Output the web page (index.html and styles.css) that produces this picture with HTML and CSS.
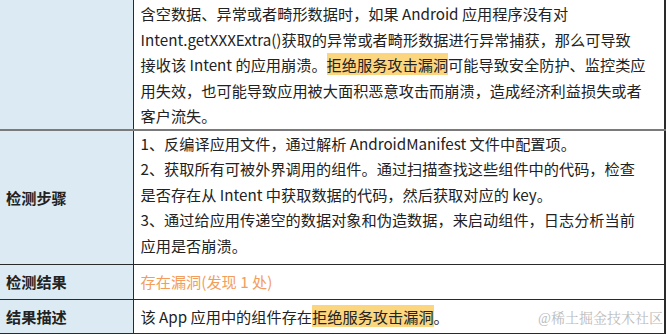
FILE: index.html
```html
<!DOCTYPE html>
<html lang="zh-CN">
<head>
  <meta charset="UTF-8">
  <meta name="viewport" content="width=device-width, initial-scale=1.0">
  <title>检测报告</title>
  <link rel="stylesheet" href="styles.css">
</head>
<body>
  <table class="report">
    <colgroup>
      <col class="col-label">
      <col>
    </colgroup>
    <tr class="row-first">
      <th class="label"></th>
      <td class="value">
        含空数据、异常或者畸形数据时，如果 Android 应用程序没有对<br>
        Intent.getXXXExtra()获取的异常或者畸形数据进行异常捕获，那么可导致<br>
        接收该 Intent 的应用崩溃。<span class="mark">拒绝服务攻击漏洞</span>可能导致安全防护、监控类应<br>
        用失效，也可能导致应用被大面积恶意攻击而崩溃，造成经济利益损失或者<br>
        客户流失。
      </td>
    </tr>
    <tr class="row-steps">
      <th class="label">检测步骤</th>
      <td class="value">
        1、反编译应用文件，通过解析 AndroidManifest 文件中配置项。<br>
        2、获取所有可被外界调用的组件。通过扫描查找这些组件中的代码，检查<br>
        是否存在从 Intent 中获取数据的代码，然后获取对应的 key。<br>
        3、通过给应用传递空的数据对象和伪造数据，来启动组件，日志分析当前<br>
        应用是否崩溃。
      </td>
    </tr>
    <tr>
      <th class="label">检测结果</th>
      <td class="value result">存在漏洞(发现 1 处)</td>
    </tr>
    <tr>
      <th class="label">结果描述</th>
      <td class="value">该 App 应用中的组件存在<span class="mark">拒绝服务攻击漏洞</span>。</td>
    </tr>
  </table>
  <div class="watermark">@稀土掘金技术社区</div>
</body>
</html>
```

FILE: styles.css
```css
body {
  margin: 0;
  background: #ffffff;
  font-family: "Noto Sans CJK SC", "Noto Sans", sans-serif;
  color: #222;
  overflow: hidden;
}
.report {
  border-collapse: collapse;
  table-layout: fixed;
  width: 666px;
  font-size: 15.2px;
  line-height: 25.5px;
}
.col-label {
  width: 133px;
}
.report th,
.report td {
  border: 1px solid #2a2a2a;
  border-left: none;
  white-space: nowrap;
  overflow: hidden;
}
.report td {
  border-right: 2px solid #2a2a2a;
}
.label {
  background: #dcebf3;
  text-align: left;
  font-weight: bold;
  padding: 0 6px;
  border-right: 2px solid #2a2a2a;
  vertical-align: middle;
}
.value {
  padding: 4px 6px 4px 7px;
  text-align: left;
  vertical-align: middle;
}
.row-first th,
.row-first td {
  border-top: none;
  border-bottom: 2px solid #7a7a7a;
}
.row-first .value {
  padding-top: 1px;
  padding-bottom: 0;
}
.row-steps .value {
  padding-top: 0;
  padding-bottom: 6px;
}
.result {
  color: #f39d5d;
}
.mark {
  background: #fcd67f;
}
.watermark {
  position: absolute;
  right: 4px;
  top: 307px;
  font-family: "Liberation Serif", "Noto Serif CJK SC", serif;
  font-size: 14px;
  color: #bcbcbc;
}
```
